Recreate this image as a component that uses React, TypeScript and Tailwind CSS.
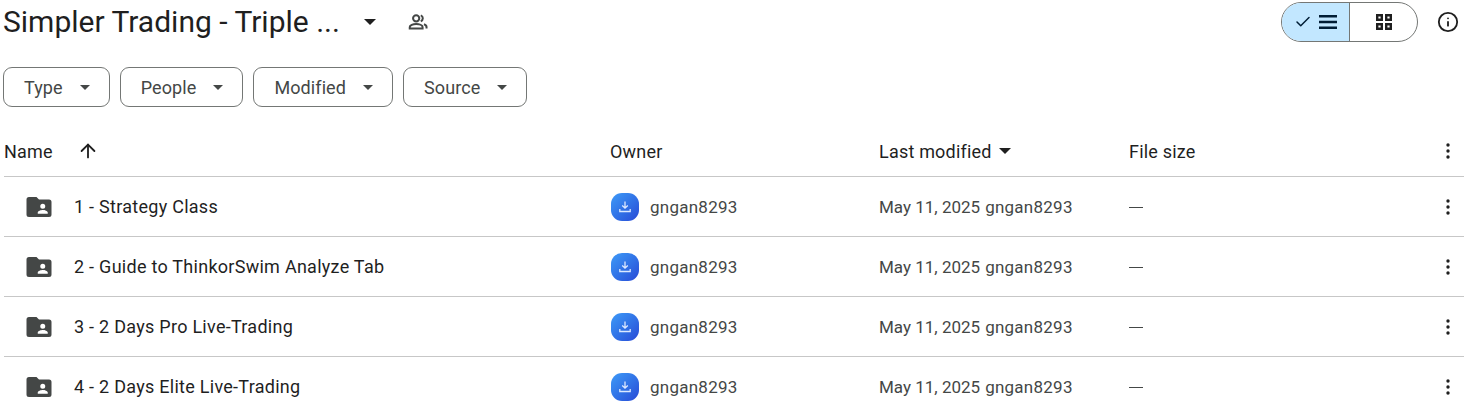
import { ArrowUp, Check, Info } from 'lucide-react';

const filters = ['Type', 'People', 'Modified', 'Source'];

const rows = [
  '1 - Strategy Class',
  '2 - Guide to ThinkorSwim Analyze Tab',
  '3 - 2 Days Pro Live-Trading',
  '4 - 2 Days Elite Live-Trading',
];

function Caret({ className }: { className: string }) {
  return (
    <svg viewBox="0 0 10 5" className={className} fill="currentColor">
      <path d="M0 0h10L5 5z" />
    </svg>
  );
}

function Kebab() {
  return (
    <svg viewBox="0 0 20 20" className="w-[20px] h-[20px] text-[#1f1f1f]" fill="currentColor">
      <circle cx="10" cy="4" r="1.7" />
      <circle cx="10" cy="10" r="1.7" />
      <circle cx="10" cy="16" r="1.7" />
    </svg>
  );
}

function SharedFolder() {
  return (
    <svg viewBox="0 0 24 24" className="w-[30px] h-[30px] text-[#444746]" fill="currentColor">
      <path
        fillRule="evenodd"
        d="M4 4h6l2 2h8a2 2 0 0 1 2 2v10a2 2 0 0 1-2 2H4a2 2 0 0 1-2-2V6a2 2 0 0 1 2-2zm11 5.4a2 2 0 1 0 0 4 2 2 0 0 0 0-4zM11 17.4h8v-1c0-1.3-2.7-2-4-2s-4 .7-4 2z"
      />
    </svg>
  );
}

function OwnerIcon() {
  return (
    <div className="w-7 h-7 rounded-[11px] bg-gradient-to-br from-[#3f9af7] to-[#2a49d6] flex items-center justify-center">
      <svg viewBox="0 0 16 16" className="w-4 h-4 text-[#dce9ff]" fill="none" stroke="currentColor" strokeWidth="1.3">
        <path d="M8 2.5v6.5M5.2 6.5 8 9.2l2.8-2.7M2.8 10v2.5h10.4V10" />
      </svg>
    </div>
  );
}

export default function App() {
  return (
    <div className="w-[1464px] h-[407px] overflow-hidden bg-white text-[#1f1f1f] font-['Roboto',sans-serif]">
      {/* Title bar */}
      <div className="flex items-center h-[44px] pl-[3px] pr-[4px]">
        <span className="text-[30px] leading-[44px] w-[361px] whitespace-nowrap">Simpler Trading - Triple ...</span>
        <Caret className="w-[12px] h-[6px] text-[#1f1f1f] mr-[31px]" />
        <svg viewBox="0 0 24 24" className="w-[22px] h-[22px] text-[#444746]" fill="none" stroke="currentColor" strokeWidth="2.2">
          <circle cx="10" cy="8" r="3.4" />
          <path d="M3 19v-1.5c0-2 3.5-3.3 7-3.3s7 1.3 7 3.3V19zM15 4.8a3.4 3.4 0 0 1 0 6.4M18.5 14.5c1.6.6 2.8 1.6 2.8 3V19" />
        </svg>
        <div className="ml-auto flex items-center">
          <div className="flex h-[40px] w-[137px] rounded-full border border-[#747775] overflow-hidden">
            <div className="w-[68px] bg-[#c2e7ff] border-r border-[#747775] flex items-center justify-center gap-[7px] text-[#001d35]">
              <Check className="w-[18px] h-[18px]" strokeWidth={2} />
              <svg viewBox="0 0 18 14" className="w-[18px] h-[14px]" fill="currentColor">
                <path d="M0 0h18v2.4H0zM0 5.8h18v2.4H0zM0 11.6h18V14H0z" />
              </svg>
            </div>
            <div className="flex-1 flex items-center justify-center text-[#1f1f1f]">
              <svg viewBox="0 0 18 18" className="w-[18px] h-[18px]" fill="none" stroke="currentColor" strokeWidth="2.4">
                <path d="M2.2 2.2h4.6v4.6H2.2zM11.2 2.2h4.6v4.6h-4.6zM2.2 11.2h4.6v4.6H2.2zM11.2 11.2h4.6v4.6h-4.6z" />
              </svg>
            </div>
          </div>
          <Info className="w-[22px] h-[22px] ml-[19px] mr-[1px] text-[#1f1f1f]" strokeWidth={2} />
        </div>
      </div>

      {/* Filter chips */}
      <div className="flex gap-[10px] pl-[3px] mt-[23px]">
        {filters.map((f) => (
          <div
            key={f}
            className="h-[40px] flex items-center pl-[20px] pr-[19px] gap-[17px] rounded-[9px] border border-[#747775] text-[#444746] text-[18px] tracking-[0.1px]"
          >
            <span>{f}</span>
            <Caret className="w-[10px] h-[5px]" />
          </div>
        ))}
      </div>

      {/* Column headers */}
      <div className="grid grid-cols-[606px_269px_250px_1fr] ml-[4px] h-[71px] mt-[-1px] items-center border-b border-[#c7c7c7] text-[18px] tracking-[0.2px] pt-[24px] pb-[4px]">
        <div className="flex items-center gap-[24px]">
          <span>Name</span>
          <ArrowUp className="w-[22px] h-[22px]" strokeWidth={2} />
        </div>
        <span>Owner</span>
        <div className="flex items-center gap-[7px]">
          <span>Last modified</span>
          <Caret className="w-[12px] h-[6px]" />
        </div>
        <div className="flex items-center justify-between pr-[6px]">
          <span>File size</span>
          <Kebab />
        </div>
      </div>

      {/* Rows */}
      {rows.map((name) => (
        <div
          key={name}
          className="grid grid-cols-[606px_269px_250px_1fr] ml-[4px] h-[60px] items-center border-b border-[#c7c7c7]"
        >
          <div className="flex items-center pl-[20px] gap-[20px] text-[18px] tracking-[0.27px]">
            <SharedFolder />
            <span>{name}</span>
          </div>
          <div className="flex items-center gap-[11px] text-[#444746] text-[17px] tracking-[0.25px] pl-[1px]">
            <OwnerIcon />
            <span className="pt-[2px]">gngan8293</span>
          </div>
          <div className="flex gap-[5px] pt-[2px] text-[#444746] text-[17px] whitespace-nowrap">
            <span>May 11, 2025</span>
            <span className="tracking-[0.25px]">gngan8293</span>
          </div>
          <div className="flex items-center justify-between pr-[6px] text-[#444746] text-[17px]">
            <span className="w-[14px] h-[1px] mt-[1px] bg-[#444746]" />
            <Kebab />
          </div>
        </div>
      ))}
    </div>
  );
}
